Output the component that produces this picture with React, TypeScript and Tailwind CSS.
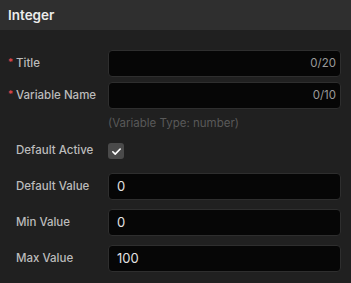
import { useState } from "react";

const font = { fontFamily: "Inter, 'Noto Sans', sans-serif" };

const Label = ({ text, required }: { text: string; required?: boolean }) => (
  <div className="w-[100px] shrink-0 flex items-center text-[11.5px] font-medium text-[#bcbcbc]">
    <span className="w-[8px] text-[#e5484d] text-[10px] leading-none relative -top-[2px]">{required ? "*" : ""}</span>
    <span>{text}</span>
  </div>
);

const Field = ({ value, counter }: { value?: string; counter?: string }) => (
  <div className="flex-1 h-[27px] flex items-center justify-between rounded-[4px] border border-[#2e2e2e] bg-[#060606] pl-[8px] pr-[4px]">
    <span className="text-[13px] text-[#e2e2e2]">{value}</span>
    {counter && <span className="text-[11.5px] text-[#9a9a9a]">{counter}</span>}
  </div>
);

export default function App() {
  const [active, setActive] = useState(true);
  return (
    <div className="w-[351px] h-[283px] bg-[#202020] overflow-hidden" style={font}>
      <div className="h-[30px] bg-[#2f2f2f] flex items-center px-[8px]">
        <h3 className="text-[13.5px] font-semibold text-[#ececec]">Integer</h3>
      </div>
      <div className="pt-[20px] pl-[8px] pr-[10px] flex flex-col">
        <div className="flex items-center">
          <Label text="Title" required />
          <Field counter="0/20" />
        </div>
        <div className="flex items-center mt-[5px]">
          <Label text="Variable Name" required />
          <Field counter="0/10" />
        </div>
        <div className="ml-[100px] mt-[7px] h-[15px] leading-[15px] text-[11.5px] text-[#595959]">
          (Variable Type: number)
        </div>
        <div className="flex items-center mt-[12px] h-[16px]">
          <Label text="Default Active" />
          <button
            onClick={() => setActive(!active)}
            className="w-[16px] h-[16px] rounded-[3px] bg-[#4a4a4a] flex items-center justify-center"
          >
            {active && (
              <svg width="11" height="11" viewBox="0 0 12 12" fill="none">
                <path d="M2 6.3l2.6 2.6L10 3.3" stroke="#ffffff" strokeWidth="1.8" strokeLinecap="round" strokeLinejoin="round" />
              </svg>
            )}
          </button>
        </div>
        <div className="flex items-center mt-[14px]">
          <Label text="Default Value" />
          <Field value="0" />
        </div>
        <div className="flex items-center mt-[9px]">
          <Label text="Min Value" />
          <Field value="0" />
        </div>
        <div className="flex items-center mt-[9px]">
          <Label text="Max Value" />
          <Field value="100" />
        </div>
      </div>
    </div>
  );
}
